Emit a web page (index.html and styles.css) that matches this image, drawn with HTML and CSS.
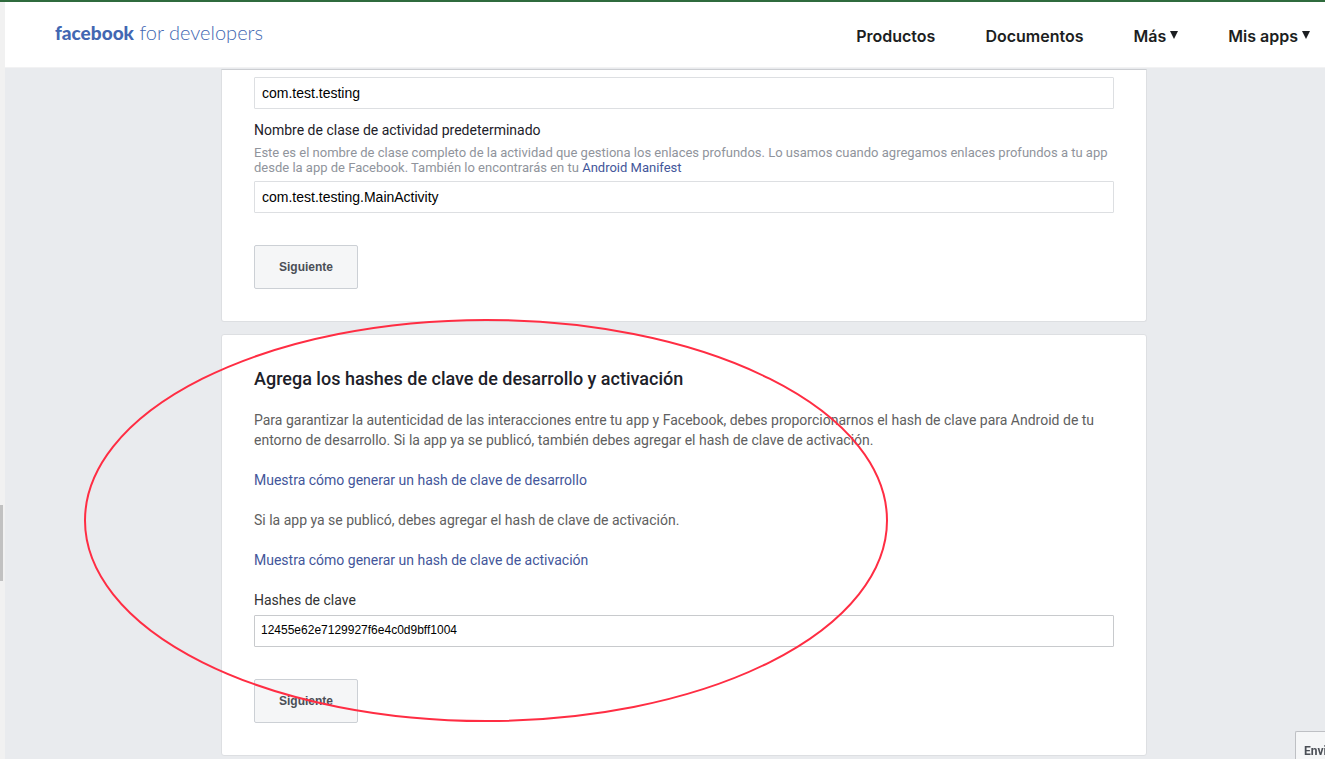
FILE: index.html
```html
<!DOCTYPE html>
<html lang="es">
<head>
<meta charset="utf-8">
<title>facebook for developers</title>
<link rel="stylesheet" href="styles.css">
</head>
<body>
<div class="page">
  <div class="gutter"><div class="thumb"></div></div>
  <div class="main">
    <header class="header">
      <a class="logo" href="#"><b>facebook</b> for developers</a>
      <nav class="nav">
        <a href="#">Productos</a>
        <a href="#">Documentos</a>
        <a href="#">Más <svg class="caret" viewBox="0 0 8 8"><path d="M0 0h8L4 8z"/></svg></a>
        <a href="#">Mis apps <svg class="caret" viewBox="0 0 8 8"><path d="M0 0h8L4 8z"/></svg></a>
      </nav>
    </header>
    <main class="content">
      <section class="card card-first">
        <input class="field" type="text" value="com.test.testing" aria-label="Nombre del paquete">
        <label class="label" for="activity">Nombre de clase de actividad predeterminado</label>
        <p class="hint">Este es el nombre de clase completo de la actividad que gestiona los enlaces profundos. Lo usamos cuando agregamos enlaces profundos a tu app desde la app de Facebook. También lo encontrarás en tu <a href="#">Android Manifest</a></p>
        <input class="field" id="activity" type="text" value="com.test.testing.MainActivity">
        <button class="next" type="button">Siguiente</button>
      </section>
      <section class="card">
        <h2 class="title">Agrega los hashes de clave de desarrollo y activación</h2>
        <p class="text">Para garantizar la autenticidad de las interacciones entre tu app y Facebook, debes proporcionarnos el hash de clave para Android de tu entorno de desarrollo. Si la app ya se publicó, también debes agregar el hash de clave de activación.</p>
        <p class="text"><a href="#">Muestra cómo generar un hash de clave de desarrollo</a></p>
        <p class="text">Si la app ya se publicó, debes agregar el hash de clave de activación.</p>
        <p class="text"><a href="#">Muestra cómo generar un hash de clave de activación</a></p>
        <label class="label label-hash" for="hashes">Hashes de clave</label>
        <input class="field field-hash" id="hashes" type="text" value="12455e62e7129927f6e4c0d9bff1004">
        <button class="next" type="button">Siguiente</button>
      </section>
    </main>
  </div>
</div>
<svg class="mark" viewBox="0 0 804 403"><ellipse cx="402" cy="201.5" rx="401" ry="200.5"/></svg>
<button class="send" type="button">Envi</button>
</body>
</html>
```

FILE: styles.css
```css
* { box-sizing: border-box; }
body {
  margin: 0;
  overflow: hidden;
  background: #e9ebee;
  font-family: Roboto, "Liberation Sans", sans-serif;
  font-size: 14px;
  line-height: 20px;
  color: #1d2129;
}
a { color: #43569a; text-decoration: none; }
p, h2 { margin: 0; }

.page {
  display: flex;
  min-height: 100vh;
  border-top: 2px solid #2f6b3d;
}
.gutter { width: 5px; background: #f1f1f1; padding-top: 503px; }
.thumb { width: 3px; height: 76px; background: #c1c1c1; }
.main { flex: 1; min-width: 0; }

.header {
  display: flex;
  align-items: center;
  justify-content: space-between;
  height: 66px;
  padding: 0 15px 0 50px;
  background: #fff;
  border-bottom: 1px solid #f2f2f3;
}
.logo {
  font-family: Lato, "Open Sans", sans-serif;
  font-size: 20px;
  font-weight: 300;
  color: #4267b2;
  padding-bottom: 4px;
}
.logo b { font-weight: 900; font-size: 19px; }
.nav { display: flex; gap: 50px; padding-top: 2px; }
.nav a {
  font-family: Inter, sans-serif;
  font-size: 16px;
  font-weight: 600;
  color: #1c1e21;
  white-space: nowrap;
}
.caret { width: 8px; height: 8px; fill: #1c1e21; vertical-align: 3px; }

.content {
  display: flex;
  flex-direction: column;
  gap: 12px;
  padding: 0 178px 3px 216px;
}
.card {
  display: flex;
  flex-direction: column;
  align-items: flex-start;
  padding: 32px;
  background: #fff;
  border: 1px solid #dddfe2;
  border-radius: 3px;
}
.card-first {
  padding-top: 7px;
  border-top-color: #ccced2;
  border-radius: 0 0 3px 3px;
  margin-top: 1px;
}
.field {
  width: 100%;
  height: 32px;
  padding: 0 7px;
  border: 1px solid #dddfe2;
  border-radius: 1px;
  background: #fff;
  color: #000;
  font-family: "Liberation Sans", Arial, sans-serif;
  font-size: 14px;
}
.field-hash {
  padding: 0 6px 2px;
  border-color: #c8cacd;
  font-size: 12px;
}
.label { margin: 11px 0 5px; }
.label-hash { margin-top: 20px; color: #333; }
.hint {
  margin-bottom: 6px;
  font-size: 13px;
  line-height: 15px;
  color: #90949c;
}
.next {
  width: 104px;
  height: 44px;
  margin-top: 32px;
  padding: 0;
  border: 1px solid #ccd0d5;
  border-radius: 2px;
  background: #f5f6f7;
  color: #4b4f56;
  font-family: "Liberation Sans", Arial, sans-serif;
  font-size: 12px;
  font-weight: 700;
}
.title {
  margin-bottom: 19px;
  font-size: 18px;
  font-weight: 500;
  line-height: 24px;
}
.text { color: #606060; }
.text + .text { margin-top: 20px; }

.mark {
  position: absolute;
  left: 84px;
  top: 319px;
  width: 804px;
  height: 403px;
  fill: none;
  stroke: #ff2d43;
  stroke-width: 2px;
  pointer-events: none;
}
.send {
  position: fixed;
  right: 0;
  bottom: 0;
  width: 30px;
  height: 28px;
  padding: 10px 0 0 8px;
  border: 1px solid #bec0c4;
  border-width: 1px 0 0 1px;
  border-radius: 2px 0 0 0;
  background: #f5f6f7;
  color: #4b4f56;
  font-family: Roboto, sans-serif;
  font-size: 12px;
  font-weight: 700;
  text-align: left;
  white-space: nowrap;
}
```
